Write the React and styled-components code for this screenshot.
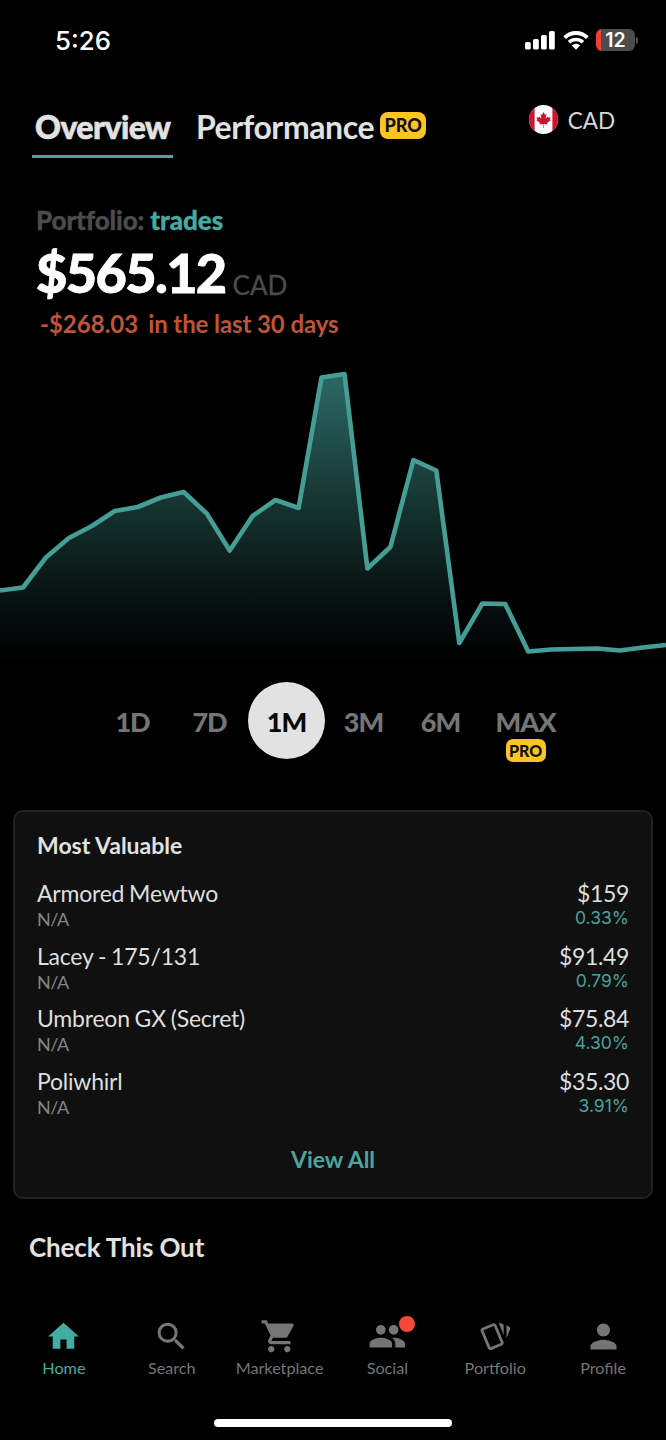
import styled, { createGlobalStyle } from "styled-components";
import { MdHome, MdSearch, MdShoppingCart, MdPeople, MdPerson } from "react-icons/md";

const points = [
  590.5, 587.5, 557.5, 538, 526, 511, 507, 497.5, 492, 513.5, 550.5, 516, 500, 508, 377.5,
  374, 568.5, 547, 460, 470.5, 643, 603.5, 604, 651.5, 649.5, 649, 648.5, 650.5, 647.5, 645,
];

const cards = [
  { name: "Armored Mewtwo", set: "N/A", price: "$159", change: "0.33%" },
  { name: "Lacey - 175/131", set: "N/A", price: "$91.49", change: "0.79%" },
  { name: "Umbreon GX (Secret)", set: "N/A", price: "$75.84", change: "4.30%" },
  { name: "Poliwhirl", set: "N/A", price: "$35.30", change: "3.91%" },
];

const ranges = ["1D", "7D", "1M", "3M", "6M"];

function SignalIcon() {
  return (
    <svg width="30" height="19" viewBox="0 0 30 19" fill="#fff">
      <rect x="0" y="11" width="5.8" height="7.5" rx="1.5" />
      <rect x="8" y="8" width="5.8" height="10.5" rx="1.5" />
      <rect x="16" y="4" width="5.8" height="14.5" rx="1.5" />
      <rect x="24" y="0" width="5.8" height="18.5" rx="1.5" />
    </svg>
  );
}

function WifiIcon() {
  return (
    <svg width="26" height="19" viewBox="0 0 26 19" fill="none" stroke="#fff">
      <path d="M1.6 6.6a16.4 16.4 0 0 1 22.8 0" strokeWidth="3.8" />
      <path d="M6 11.3a10.2 10.2 0 0 1 14 0" strokeWidth="3.6" />
      <path d="M13 18.7l-4.2-4.2a6.2 6.2 0 0 1 8.4 0z" fill="#fff" stroke="none" />
    </svg>
  );
}

function FlagIcon() {
  return (
    <svg width="29" height="29" viewBox="0 0 29 29">
      <clipPath id="round"><circle cx="14.5" cy="14.5" r="14.5" /></clipPath>
      <g clipPath="url(#round)">
        <rect width="29" height="29" fill="#fff" />
        <rect width="5.6" height="29" fill="#d0112f" />
        <rect x="23.4" width="5.6" height="29" fill="#d0112f" />
        <path
          transform="translate(-4.3 5.6) scale(0.00392)"
          fill="#d0112f"
          d="M4715 4385l45-863a95 95 0 0 0-111-98l-859 151 116-320a65 65 0 0 0-20-73l-941-762 212-99a65 65 0 0 0 34-79l-186-572 542 115a65 65 0 0 0 73-38l105-247 423 454a65 65 0 0 0 111-57l-204-1052 327 189a65 65 0 0 0 91-27l332-652 332 652a65 65 0 0 0 91 27l327-189-204 1052a65 65 0 0 0 111 57l423-454 105 247a65 65 0 0 0 73 38l542-115-186 572a65 65 0 0 0 34 79l212 99-941 762a65 65 0 0 0-20 73l116 320-859-151a95 95 0 0 0-111 98l45 863z"
        />
      </g>
    </svg>
  );
}

function CardsIcon() {
  return (
    <svg width="34" height="34" viewBox="0 0 24 24" fill="currentColor">
      <path d="M11.19 2.25c-.27 0-.53.06-.77.15L3.06 5.45a2 2 0 0 0-1.09 2.6L6.93 20c.31.77 1.04 1.23 1.81 1.25.26 0 .53-.03.79-.15l7.37-3.05a2.04 2.04 0 0 0 1.23-1.8c.01-.25-.04-.54-.13-.8L13 3.5a1.95 1.95 0 0 0-1.81-1.25m3.48 0l3.45 8.35V4.25a2 2 0 0 0-2-2m4.01 1.54v9.03l2.43-5.86a1.99 1.99 0 0 0-1.09-2.6M11.19 4.22l4.98 12.02-7.39 3.06L3.8 7.29z" />
    </svg>
  );
}

function Chart() {
  const step = 666 / (points.length - 1);
  const line = points.map((y, i) => `${(i * step).toFixed(1)},${y - 360}`).join(" ");
  return (
    <ChartSvg viewBox="0 0 666 310">
      <defs>
        <linearGradient id="fade" x1="0" y1="14" x2="0" y2="304" gradientUnits="userSpaceOnUse">
          <stop offset="0" stopColor="#45a49b" stopOpacity="0.64" />
          <stop offset="0.44" stopColor="#45a49b" stopOpacity="0.32" />
          <stop offset="0.75" stopColor="#45a49b" stopOpacity="0.12" />
          <stop offset="1" stopColor="#45a49b" stopOpacity="0" />
        </linearGradient>
      </defs>
      <polygon points={`0,310 ${line} 666,310`} fill="url(#fade)" />
      <polyline points={line} fill="none" stroke="#459e95" strokeWidth="4.6" strokeLinejoin="round" />
    </ChartSvg>
  );
}

const tabs = [
  { label: "Home", icon: <MdHome size={37} />, active: true },
  { label: "Search", icon: <MdSearch size={37} /> },
  { label: "Marketplace", icon: <MdShoppingCart size={38.5} /> },
  { label: "Social", icon: <MdPeople size={38.5} />, dot: true },
  { label: "Portfolio", icon: <CardsIcon /> },
  { label: "Profile", icon: <MdPerson size={39} /> },
];

function App() {
  return (
    <>
      <GlobalStyle />
      <Screen>
        <StatusBar>
          <Time>5:26</Time>
          <StatusIcons>
            <SignalIcon />
            <WifiIcon />
            <BatteryWrap>
              <Battery>12</Battery>
              <BatteryTip />
            </BatteryWrap>
          </StatusIcons>
        </StatusBar>

        <Header>
          <Tab $active>Overview</Tab>
          <Tab>Performance</Tab>
          <ProBadge>PRO</ProBadge>
          <Currency>
            <FlagIcon />
            <span>CAD</span>
          </Currency>
        </Header>

        <Summary>
          <PortfolioName>Portfolio: <span>trades</span></PortfolioName>
          <Amount>$565.12<small>CAD</small></Amount>
          <Change>-$268.03<span>in the last 30 days</span></Change>
        </Summary>

        <Chart />

        <Ranges>
          {ranges.map((r) => <Range key={r} $active={r === "1M"}>{r}</Range>)}
          <Range $wide>
            MAX
            <ProBadge $small>PRO</ProBadge>
          </Range>
        </Ranges>

        <Panel>
          <PanelTitle>Most Valuable</PanelTitle>
          {cards.map((c) => (
            <Row key={c.name}>
              <div>
                <Name>{c.name}</Name>
                <SetName>{c.set}</SetName>
              </div>
              <Right>
                <Price>{c.price}</Price>
                <Percent>{c.change}</Percent>
              </Right>
            </Row>
          ))}
          <ViewAll>View All</ViewAll>
        </Panel>

        <SectionTitle>Check This Out</SectionTitle>

        <TabBar>
          {tabs.map((t) => (
            <TabItem key={t.label} $active={t.active}>
              <IconBox>
                {t.icon}
                {t.dot && <Dot />}
              </IconBox>
              <TabLabel>{t.label}</TabLabel>
            </TabItem>
          ))}
        </TabBar>
        <HomeIndicator />
      </Screen>
    </>
  );
}

const GlobalStyle = createGlobalStyle`
  * {
    box-sizing: border-box;
  }
  body {
    margin: 0;
    background: #000;
  }
  svg {
    display: block;
    flex-shrink: 0;
  }
`;

const Screen = styled.div`
  width: 666px;
  height: 1440px;
  overflow: hidden;
  display: flex;
  flex-direction: column;
  background: #000;
  color: #e2e2e2;
  font-family: Lato, "Liberation Sans", sans-serif;
`;

const StatusBar = styled.div`
  height: 80px;
  padding: 0 28px 0 55px;
  display: flex;
  align-items: center;
  justify-content: space-between;
`;

const Time = styled.div`
  padding-top: 1px;
  font: 500 25.8px/30px Inter, sans-serif;
  color: #fff;
`;

const StatusIcons = styled.div`
  display: flex;
  align-items: center;
  gap: 7.5px;
`;

const BatteryWrap = styled.div`
  display: flex;
  align-items: center;
  gap: 1px;
`;

const Battery = styled.div`
  width: 39px;
  height: 22px;
  border-radius: 6px;
  background: linear-gradient(90deg, #ee4036 5px, #4c4c4c 5px);
  color: #fff;
  font: 600 19.5px/22px Inter, sans-serif;
  text-align: center;
`;

const BatteryTip = styled.div`
  width: 2px;
  height: 7px;
  border-radius: 0 3px 3px 0;
  background: #4c4c4c;
`;

const Header = styled.div`
  height: 78px;
  padding: 0 51px 0 32px;
  display: flex;
  align-items: flex-start;
`;

const Tab = styled.div`
  height: 78px;
  padding: 25px 3px 0;
  margin-right: ${(props) => (props.$active ? "19.5px" : "3px")};
  border-bottom: 3.5px solid ${(props) => (props.$active ? "#4fa39c" : "transparent")};
  font-size: 32px;
  line-height: 44px;
  font-weight: ${(props) => (props.$active ? 900 : 700)};
  letter-spacing: ${(props) => (props.$active ? "-0.55px" : "-0.42px")};
  -webkit-text-stroke: ${(props) => (props.$active ? "0.6px" : 0)};
`;

const ProBadge = styled.div`
  width: ${(props) => (props.$small ? "40px" : "46px")};
  height: ${(props) => (props.$small ? "23px" : "27px")};
  margin-top: ${(props) => (props.$small ? "-5px" : "32px")};
  border-radius: ${(props) => (props.$small ? "7px" : "8px")};
  background: #fcc521;
  color: #111;
  font-size: ${(props) => (props.$small ? "16px" : "18px")};
  line-height: ${(props) => (props.$small ? "23px" : "27px")};
  font-weight: 900;
  letter-spacing: 0;
  text-align: center;
`;

const Currency = styled.div`
  height: 30px;
  margin: 24px 0 0 auto;
  display: flex;
  align-items: center;
  gap: 10px;
  font-size: 22.5px;
  color: #d6d6d6;

  span {
    padding-top: 2px;
  }
`;

const Summary = styled.div`
  height: 202px;
  padding: 44px 36px 0;
`;

const PortfolioName = styled.div`
  font-size: 26px;
  line-height: 36px;
  font-weight: 900;
  letter-spacing: -0.15px;
  -webkit-text-stroke: 0.3px;
  color: #4c4c4c;

  span {
    color: #45aba0;
    letter-spacing: 0;
  }
`;

const Amount = styled.div`
  font-size: 54px;
  line-height: 70px;
  font-weight: 900;
  letter-spacing: -1.6px;
  -webkit-text-stroke: 0.8px;
  color: #fff;

  small {
    margin-left: 7px;
    font-size: 26px;
    line-height: 1;
    font-weight: 400;
    letter-spacing: 0;
    vertical-align: -2px;
    -webkit-text-stroke: 0.3px;
    color: #4c4c4c;
  }
`;

const Change = styled.div`
  padding-left: 4px;
  font-size: 24px;
  line-height: 32px;
  font-weight: 700;
  color: #bf5439;

  span {
    margin-left: 10px;
    letter-spacing: -0.1px;
  }
`;

const ChartSvg = styled.svg`
  width: 666px;
  height: 310px;
`;

const Ranges = styled.div`
  height: 140px;
  padding-top: 12px;
  display: flex;
  justify-content: center;
`;

const Range = styled.div`
  width: ${(props) => (props.$wide ? "93px" : "77px")};
  height: 77px;
  padding-top: 9px;
  border-radius: 50%;
  display: flex;
  flex-direction: column;
  align-items: center;
  background: ${(props) => (props.$active ? "#e2e2e2" : "transparent")};
  color: ${(props) => (props.$active ? "#080808" : "#757575")};
  font-size: 27px;
  line-height: 62px;
  font-weight: 900;
  letter-spacing: -1px;

  ${ProBadge} {
    margin-top: -14px;
    flex-shrink: 0;
  }
`;

const Panel = styled.div`
  width: 640px;
  height: 389px;
  margin: 0 auto;
  padding: 18px 22px;
  border: 2px solid #222;
  border-radius: 10px;
  background: #101010;
`;

const PanelTitle = styled.div`
  margin-bottom: 17px;
  font-size: 23px;
  line-height: 30px;
  font-weight: 700;
`;

const Row = styled.div`
  height: 62.7px;
  display: flex;
  justify-content: space-between;
`;

const Right = styled.div`
  text-align: right;
`;

const Name = styled.div`
  font-size: 23px;
  line-height: 32px;
  letter-spacing: -0.22px;
  word-spacing: -0.8px;
  color: #dedede;
`;

const Price = styled(Name)`
  letter-spacing: -0.35px;
`;

const SetName = styled.div`
  font-size: 18px;
  line-height: 20px;
  letter-spacing: -0.4px;
  color: #858585;
`;

const Percent = styled.div`
  font: 400 17.5px/18px Inter, sans-serif;
  color: #4ca298;
`;

const ViewAll = styled.div`
  margin-top: 16px;
  font-size: 23px;
  line-height: 30px;
  font-weight: 700;
  text-align: center;
  color: #4fa39c;
`;

const SectionTitle = styled.div`
  height: 103px;
  padding: 30px 29px 0;
  font-size: 26px;
  line-height: 36px;
  font-weight: 700;
  letter-spacing: -0.15px;
`;

const TabBar = styled.div`
  height: 117px;
  padding: 16px 9px 0 10px;
  display: grid;
  grid-template-columns: repeat(6, 1fr);
`;

const TabItem = styled.div`
  display: flex;
  flex-direction: column;
  align-items: center;
  color: ${(props) => (props.$active ? "#43aca1" : "#757575")};
`;

const IconBox = styled.div`
  position: relative;
  height: 37px;
  display: flex;
  align-items: center;
`;

const Dot = styled.div`
  position: absolute;
  top: -2px;
  right: -8px;
  width: 16px;
  height: 16px;
  border-radius: 50%;
  background: #f5483b;
`;

const TabLabel = styled.div`
  margin-top: 1px;
  font-size: 16.2px;
  line-height: 24px;
`;

const HomeIndicator = styled.div`
  width: 238px;
  height: 8px;
  margin: 0 auto;
  border-radius: 4px;
  background: #fff;
`;

export default App;
